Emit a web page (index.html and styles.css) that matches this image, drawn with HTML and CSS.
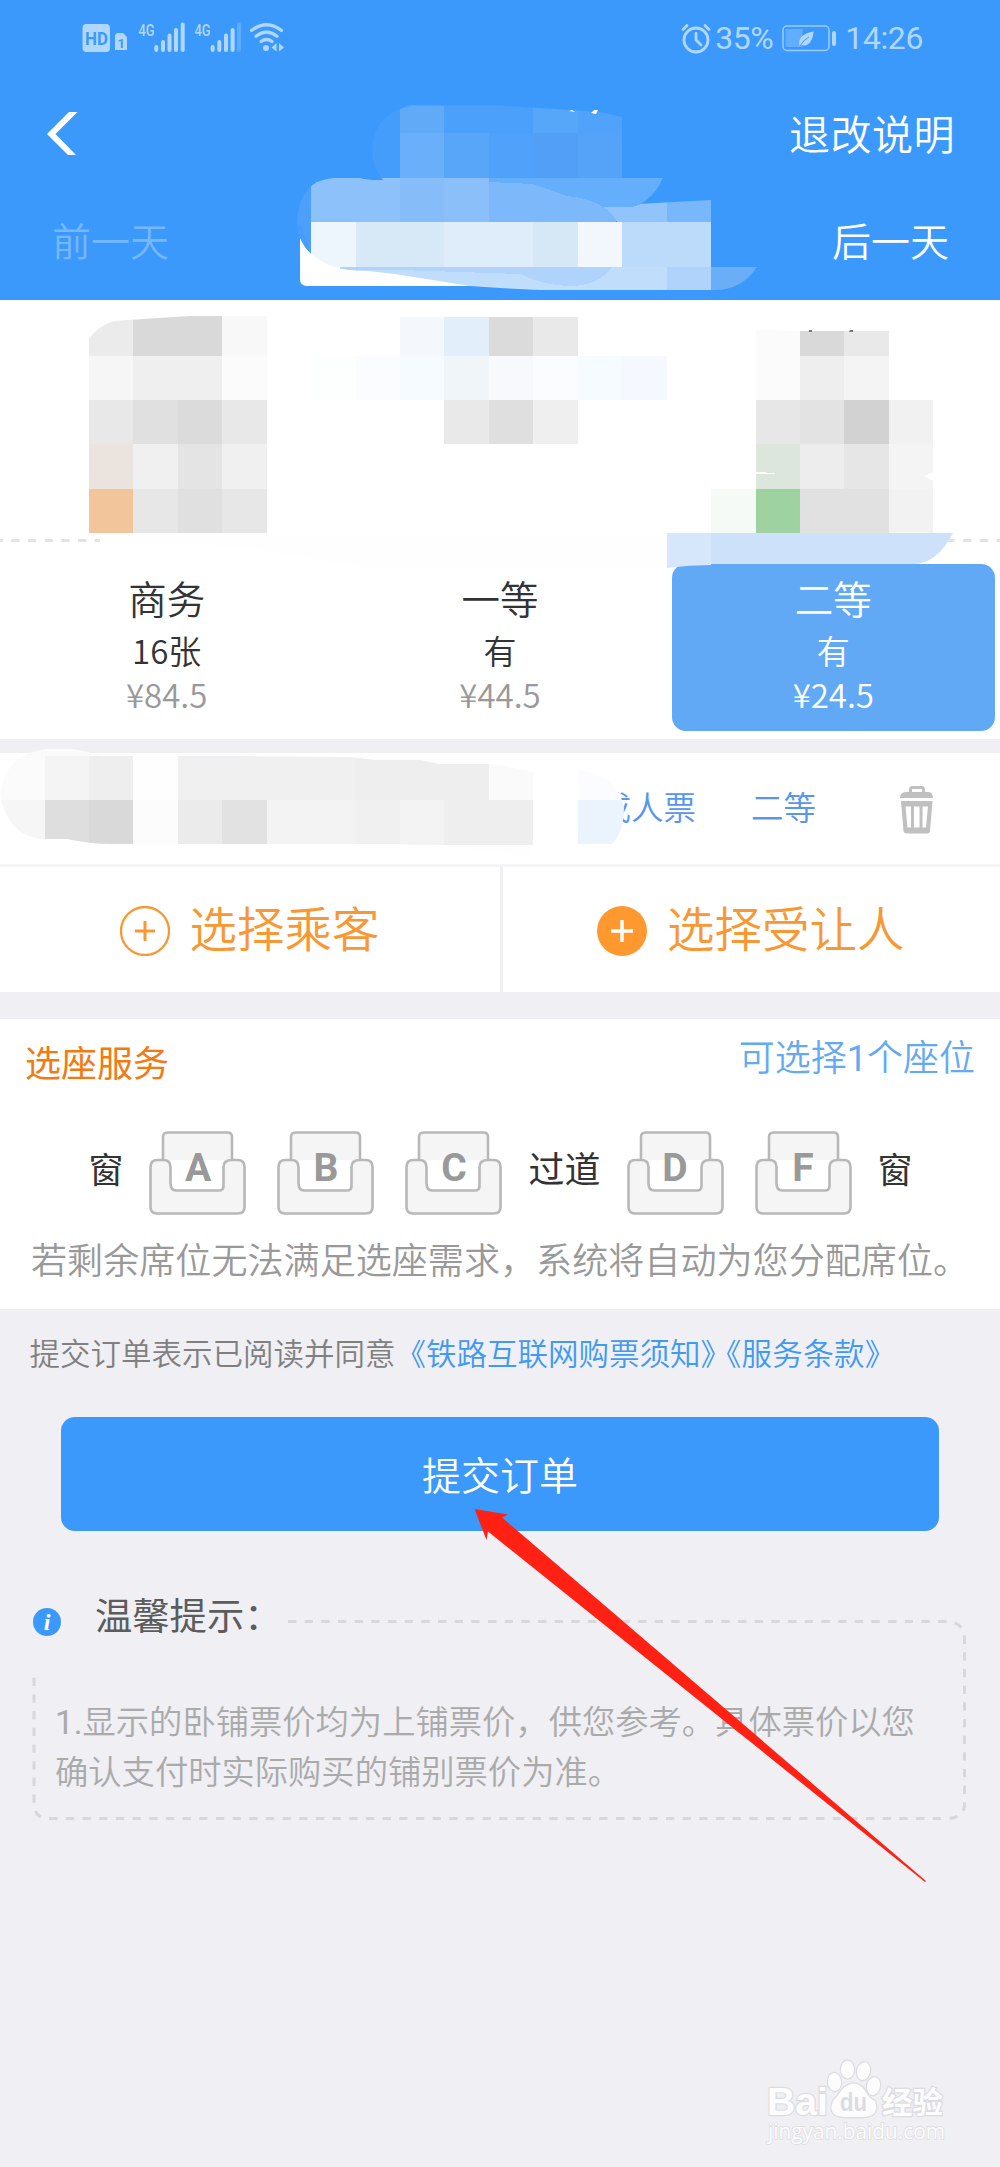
FILE: index.html
```html
<!DOCTYPE html>
<html lang="zh-CN">
<head>
<meta charset="utf-8">
<title>提交订单</title>
<link rel="stylesheet" href="styles.css">
</head>
<body>
<main class="page">
  <header class="header">
    <div class="status">
      <svg class="status-left" width="206" height="34" viewBox="80 20 206 34">
        <rect x="82.500" y="24" width="27.500" height="28" rx="4"/>
        <text class="hd" x="85" y="44.500" textLength="23" lengthAdjust="spacingAndGlyphs">HD</text>
        <path d="M117 33h6l4 4v13h-12V35z"/>
        <text class="sim" x="117.500" y="48">1</text>
        <text class="net" x="138.500" y="36" textLength="16" lengthAdjust="spacingAndGlyphs">4G</text>
        <g class="bars"><path d="M156.300 47v3"/><path d="M163 42v8"/><path d="M169.500 35.500V50"/><path d="M176 30v20"/><path d="M182.700 24.500V50"/></g>
        <text class="net" x="194.500" y="36" textLength="16" lengthAdjust="spacingAndGlyphs">4G</text>
        <g class="bars"><path d="M212.600 47v3"/><path d="M219.300 42v8"/><path d="M226 35.500V50"/><path d="M232.600 30v20"/><path class="faint" d="M239 24.500V50"/></g>
        <g class="wifi"><path d="M251.500 30.500Q266.500 19 281.500 30.500"/><path d="M256 36.200Q266.500 28 277 36.200"/><path d="M261 41.500Q266.500 37.500 272 41.500"/></g>
        <circle cx="266" cy="48" r="3"/>
        <path d="M276.500 43v8.500l-5-4zM279 43l5 4.500-5 4z"/>
      </svg>
      <div class="status-right">
        <svg width="30" height="31" viewBox="0 0 30 31"><circle class="line" cx="15" cy="17" r="12"/><path class="line" d="M15 10.500V17l5 5M2 6.500l4-4M28 6.500l-4-4"/></svg>
        <span class="battery-text">35%</span>
        <svg class="battery" width="54" height="27" viewBox="0 0 54 27"><rect class="shell" x="1" y="1" width="46" height="24.500" rx="4"/><rect class="charge" x="3.500" y="4" width="17" height="18"/><path d="M17.500 21c-2-8 4-13 14-14.500C31 16 26 22.500 19.500 20l-1.500 1.500z"/><path class="vein" d="M18 21q4-7 9-9"/><rect x="50" y="6" width="4" height="15" rx="2"/></svg>
        <time>14:26</time>
      </div>
    </div>
    <nav class="title-row">
      <svg width="34" height="46" viewBox="0 0 34 46"><path d="M22 1h8.500L8.500 23 29 44h-8L0 23z" fill="#fff"/></svg>
      <span>退改说明</span>
    </nav>
    <div class="date-row"><span class="off">前一天</span><span class="date"></span><span>后一天</span></div>
  </header>

  <section class="train">
    <div class="route"></div>
    <svg class="rule" width="1000" height="3"><path d="M-5.500 1.500H1000" stroke="#e3e3e3" stroke-width="3" stroke-dasharray="8.400 8.300"/></svg>
    <div class="classes">
      <div class="class"><b>商务</b><span>16张</span><i>¥84.5</i></div>
      <div class="class"><b>一等</b><span>有</span><i>¥44.5</i></div>
      <div class="class chosen"><b>二等</b><span>有</span><i>¥24.5</i></div>
    </div>
  </section>

  <section class="passenger">
    <div class="ticket">
      <span>成人票</span><span>二等</span>
      <svg width="34" height="48" viewBox="0 0 34 48"><path fill="none" stroke="#c0c0c0" stroke-width="3" d="M10.500 7V3.500q0-2 2-2h9q2 0 2 2V7"/><path fill="#c0c0c0" d="M5 6h24q4 1 4 6H0q0-5 5-6z"/><path fill="#c0c0c0" fill-rule="evenodd" d="M1 15h31.500L30 45q0 2.500-3 2.500H7Q4 47.500 3.500 45zM5.500 20.500 7.500 41.500h3.500v-21zM14 20.500v21h5.500v-21zM22.500 20.500v21H26l2-21z"/></svg>
    </div>
    <div class="actions">
      <div class="action first">
        <svg width="50" height="50" viewBox="0 0 50 50" fill="none" stroke="#f79834"><circle cx="25" cy="25" r="24" stroke-width="2.300"/><path d="M25 15v20M15 25h20" stroke-width="3"/></svg>
        <span>选择乘客</span>
      </div>
      <div class="action second">
        <svg width="50" height="50" viewBox="0 0 50 50"><circle cx="25" cy="25" r="25" fill="#ff982e"/><path d="M25 14v22M14 25h22" stroke="#fff" stroke-width="3.500"/></svg>
        <span>选择受让人</span>
      </div>
    </div>
  </section>

  <section class="seat-card">
    <div class="seat-head"><h2>选座服务</h2><span>可选择<em>1</em>个座位</span></div>
    <svg class="defs" width="0" height="0"><symbol id="seat" viewBox="0 0 97 84"><path d="M14 29V6q0-4.500 4.500-4.500h60Q83 1.500 83 6v23h5.500q7 0 7 7v40q0 6.500-6.500 6.500H8q-6.500 0-6.500-6.500V36q0-7 7-7zM14 29q7.500 0 7.500 7v16.500q0 7 6 7h42.500q4.500 0 4.500-4.500V36q0-7 8.500-7"/></symbol></svg>
    <div class="seats">
      <span>窗</span>
      <div class="seat-group">
        <div class="seat"><svg><use href="#seat"/></svg><strong>A</strong></div>
        <div class="seat"><svg><use href="#seat"/></svg><strong>B</strong></div>
        <div class="seat"><svg><use href="#seat"/></svg><strong>C</strong></div>
      </div>
      <span>过道</span>
      <div class="seat-group">
        <div class="seat"><svg><use href="#seat"/></svg><strong>D</strong></div>
        <div class="seat"><svg><use href="#seat"/></svg><strong>F</strong></div>
      </div>
      <span>窗</span>
    </div>
    <p class="seat-note">若剩余席位无法满足选座需求，系统将自动为您分配席位。</p>
  </section>

  <p class="agree">提交订单表示已阅读并同意<a>《铁路互联网购票须知》</a><a class="terms">《服务条款》</a></p>
  <div class="submit">提交订单</div>

  <section class="tips">
    <svg class="frame" width="935" height="206" viewBox="0 0 935 206"><path d="M256 3.500H914Q932.500 3.500 932.500 22V186Q932.500 200.500 914 200.500H18Q2 200.500 2 186V56"/></svg>
    <div class="tips-head"><svg width="28" height="28" viewBox="0 0 28 28"><circle cx="14" cy="14" r="14" fill="#3b99fc"/><text x="14" y="22" text-anchor="middle">i</text></svg><h3>温馨提示：</h3></div>
    <p><em>1.</em>显示的卧铺票价均为上铺票价，供您参考。具体票价以您<br>确认支付时实际购买的铺别票价为准。</p>
  </section>

  <svg class="overlay" width="1000" height="2167" viewBox="0 0 1000 2167">
    <defs>
      <clipPath id="leftCard"><path d="M80 350Q99 321 120 320.500L190 316H270V540H80z"/></clipPath>
      <clipPath id="rightCard"><path d="M700 328 800 331H1000V540H700z"/></clipPath>
      <clipPath id="name"><path d="M0 795Q4 755 45 749H72Q88 751 98 755L350 757 376 760H420L440 764 488 764 500 765 534 772V770H580Q618 775 624 808 624 832 612 844H578V857H533L460 849 400 844H110Q90 844 67 839H40Q8 835 0 795z"/></clipPath>
      <clipPath id="top"><path d="M400 105.500H500L600 112 622 117V178H663Q650 206 627 206H600L711 200V266.700H757Q742 290 715 290H540L500 288 470 286 395 274 368 271Q345 271 329 265 299 252 297 222 299 180 334 178H360Q368 180.500 383 180 372 166 372 150 374 111 415 105z"/></clipPath>
    </defs>
    <path fill="#fff" d="M300 238V279Q300 286 307 286H478L500 287V262H330L311 250z"/>
    <g class="mosaic" clip-path="url(#top)">
      <path fill="#459dfb" d="M365 100h50v85h-50z"/><path fill="#60aaf8" d="M400 100h44v33h-44z"/><path fill="#4aa0fb" d="M444 100h90v33h-90z"/><path fill="#56a6fa" d="M533 100h45v33h-45z"/><path fill="#50a2fa" d="M578 100h44v33h-44z"/>
      <path fill="#6aaff9" d="M400 133h44v45h-44z"/><path fill="#58a6f9" d="M444 133h45v45h-45z"/><path fill="#4fa1f9" d="M489 133h44v45h-44z"/><path fill="#529ff7" d="M533 133h45v45h-45z"/><path fill="#54a3f9" d="M578 133h44v45h-44z"/>
      <path fill="#4c9ffb" d="M290 178h21v90h-21z"/><path fill="#8dc1fa" d="M311 178h89v44h-89z"/><path fill="#86bcf8" d="M400 178h44v44h-44z"/><path fill="#8abffa" d="M444 178h45v44h-45z"/><path fill="#7cb8fa" d="M489 178h127v44H489z"/><path fill="#90c4fb" d="M603 200h64v22h-50Q613 213 603 207z"/><path fill="#64aefb" d="M489 178H663Q650 207 628 207H603Q590 198 567 196L533 184 489 182z"/>
      <path fill="#78b7fa" d="M667 200h44v23h-44z"/>
      <path fill="#edf5fd" d="M311 222h45v45h-45z"/><path fill="#d7e8f7" d="M356 222h88v45h-88z"/><path fill="#dfecf9" d="M444 222h89v45h-89z"/><path fill="#d6e8f6" d="M533 222h45v45h-45z"/><path fill="#f2f7fe" d="M578 222h44v45h-44z"/><path fill="#bcdbfa" d="M622 222h89v45h-89z"/>
      <path fill="#c0ddfb" d="M340 267H667V291H340z"/><path fill="#afd3fa" d="M340 267H612Q598 286 570 286 545 286 520 274L400 270H340zM667 267h44v24h-44z"/><path fill="#6aaef8" d="M711 267h50v24h-50z"/>
    </g>
    <path fill="#459dfb" d="M297 225h4q5 18 10 29Q299 243 297 225z"/>
    <path fill="#fff" d="M569 111l3-1 3 2zM591 113l3-3 4 0-2 4z"/>
    <g class="mosaic" clip-path="url(#leftCard)">
      <path fill="#ebebeb" d="M89 316h44v40H89z"/><path fill="#d9d9d9" d="M133 316h89v40h-89z"/><path fill="#f8f8f8" d="M222 316h45v40h-45z"/>
      <path fill="#f6f6f6" d="M89 356h44v44H89z"/><path fill="#efefef" d="M133 356h89v44h-89z"/><path fill="#fbfbfb" d="M222 356h45v44h-45z"/>
      <path fill="#e8e8e8" d="M89 400h44v44H89zM222 400h45v44h-45z"/><path fill="#e0e0e0" d="M133 400h45v44h-45z"/><path fill="#dbdbdb" d="M178 400h44v44h-44z"/>
      <path fill="#ebe3dd" d="M89 444h44v45H89z"/><path fill="#f0f0f0" d="M133 444h45v45h-45zM222 444h45v45h-45z"/><path fill="#e4e4e4" d="M178 444h44v45h-44z"/>
      <path fill="#f2c59b" d="M89 489h44v44H89z"/><path fill="#e7e7e7" d="M133 489h45v44h-45zM222 489h45v44h-45z"/><path fill="#e0e0e0" d="M178 489h44v44h-44z"/>
    </g>
    <g class="mosaic">
      <path fill="#f4f8fd" d="M400 317h44v39h-44z"/><path fill="#e2effb" d="M444 317h45v39h-45z"/><path fill="#dbdbdb" d="M489 317h44v39h-44z"/><path fill="#e9e9e9" d="M533 317h45v39h-45z"/>
      <path fill="#fdfffe" d="M311 356h45v44h-45z"/><path fill="#fafcff" d="M356 356h44v44h-44zM533 356h45v44h-45z"/><path fill="#f6fbff" d="M400 356h44v44h-44zM578 356h44v44h-44z"/><path fill="#eff5f9" d="M444 356h45v44h-45z"/><path fill="#f7f9fc" d="M489 356h44v44h-44z"/><path fill="#f5f9ff" d="M622 356h45v44h-45z"/>
      <path fill="#e9e9e9" d="M444 400h45v44h-45z"/><path fill="#dfdfdf" d="M489 400h44v44h-44z"/><path fill="#efefef" d="M533 400h45v44h-45z"/>
    </g>
    <g class="mosaic" clip-path="url(#rightCard)">
      <path fill="#fbfbfb" d="M756 320h44v80h-44z"/><path fill="#d9d9d9" d="M800 331h44v25h-44z"/><path fill="#e9e9e9" d="M844 331h45v25h-45z"/>
      <path fill="#eee" d="M800 356h44v44h-44z"/><path fill="#f4f4f4" d="M844 356h45v44h-45z"/>
      <path fill="#e7e7e7" d="M756 400h44v44h-44z"/><path fill="#e3e3e3" d="M800 400h44v44h-44z"/><path fill="#d2d2d2" d="M844 400h45v44h-45z"/><path fill="#f1f1f1" d="M889 400h44v44h-44z"/>
      <path fill="#dde6dd" d="M756 444h44v45h-44z"/><path fill="#ededed" d="M800 444h44v45h-44z"/><path fill="#e6e6e6" d="M844 444h45v45h-45z"/><path fill="#f4f4f4" d="M889 444h44v45h-44z"/>
      <path fill="#f5faf6" d="M711 489h45v44h-45z"/><path fill="#9fd2a1" d="M756 489h44v44h-44z"/><path fill="#e1e1e1" d="M800 489h89v44h-89z"/><path fill="#f2f2f2" d="M889 489h44v44h-44z"/>
      <path fill="#fff" d="M700 467l56 4.500 19 2-19 .8h-56zM924 476l10-4v9z"/>
    </g>
    <path fill="#777" d="M809 330h3v2h-3zM850 330h3v2h-4z"/>
    <path fill="#fefefe" d="M100 536H667V567H360L240 547 100 544z"/>
    <path fill="#cde2fa" d="M711 533H953Q937 564 913 564H711z"/><path fill="#d6e7fc" d="M667 533h44v32q-22 0-44 3z"/>
    <g class="mosaic" clip-path="url(#name)">
      <path fill="#fbfbfb" d="M0 749h100v51H0z"/><path fill="#f6f6f6" d="M0 800h45v45H0z"/>
      <path fill="#f4f4f4" d="M45 756h44v44H45z"/><path fill="#eee" d="M89 756h44v44H89z"/><path fill="#fefefe" d="M133 756h45v44h-45zM400 844h133v20H400z"/><path fill="#f0f0f0" d="M178 756h177v44H178z"/><path fill="#eee" d="M355 756h134v44H355z"/><path fill="#fafafa" d="M489 756h44v44h-44z"/><path fill="#fafcff" d="M578 756h50v44h-50z"/>
      <path fill="#dedede" d="M45 800h44v45H45z"/><path fill="#d9d9d9" d="M89 800h44v45H89z"/><path fill="#fcfcfc" d="M133 800h45v45h-45z"/><path fill="#ebebeb" d="M178 800h44v45h-44z"/><path fill="#e2e2e2" d="M222 800h45v45h-45z"/><path fill="#f3f3f3" d="M267 800h89v45h-89zM400 800h44v45h-44z"/><path fill="#f0f0f0" d="M356 800h44v45h-44z"/><path fill="#eee" d="M444 800h89v45h-89z"/><path fill="#fff" d="M533 772h45v85h-45z"/><path fill="#ebf3fd" d="M578 800h50v45h-50z"/>
    </g>
    <path fill="#ff2113" d="M474.500 1509 508 1514.500 502 1517.500 926 1881 925 1882 488 1531.500 486.500 1540z"/>
    <g class="mark">
      <text class="latin" x="767" y="2115" textLength="61" lengthAdjust="spacingAndGlyphs">Bai</text>
      <ellipse cx="834.500" cy="2082" rx="6.500" ry="9" transform="rotate(-5 834 2082)"/><ellipse cx="847.500" cy="2069.500" rx="6.500" ry="9"/><ellipse cx="863.500" cy="2071" rx="6.500" ry="9" transform="rotate(12 863 2071)"/><ellipse cx="873.500" cy="2086" rx="6.500" ry="9" transform="rotate(12 873 2086)"/>
      <path d="M853 2083.500Q861 2083.500 865 2091T875 2101Q880 2116 864 2117H844Q827 2116 833 2101 837 2097 841 2091T853 2083.500z"/>
      <text class="du" x="840" y="2111" textLength="27" lengthAdjust="spacingAndGlyphs">du</text>
      <text class="cn" x="882" y="2113" textLength="61" lengthAdjust="spacingAndGlyphs">经验</text>
      <text class="url" x="768" y="2139" textLength="177" lengthAdjust="spacingAndGlyphs">jingyan.baidu.com</text>
    </g>
  </svg>
</main>
</body>
</html>
```
FILE: styles.css
```css
* { box-sizing: border-box; }
body { margin: 0; background: #efeff4; font-family: "Noto Sans CJK SC", sans-serif; font-weight: 350; }
em, i { font-style: normal; }
h2, h3, p { margin: 0; }
em { font-family: Roboto, sans-serif; font-weight: 400; line-height: 1; }
.page { position: relative; width: 1000px; height: 2167px; overflow: hidden; }

.header { height: 300px; background: #3b99fc; color: #fff; }
.status { height: 100px; padding: 20px 77px 0 80px; display: flex; justify-content: space-between; align-items: flex-start; color: #b1d7ff; font: 400 32px/36px Roboto, sans-serif; }
.status svg { fill: #b1d7ff; }
.status text { font-family: Roboto, sans-serif; font-weight: 700; }
.status .hd { font-size: 18px; fill: #3b99fc; }
.status .sim { font-size: 13px; fill: #3b99fc; }
.status .net { font-size: 17px; font-weight: 500; }
.bars path { stroke: #b1d7ff; stroke-width: 4; stroke-linecap: round; }
.bars .faint { stroke: #5eabfb; }
.wifi path { fill: none; stroke: #b1d7ff; stroke-width: 3.2; stroke-linecap: round; }
.status-right { display: flex; align-items: center; height: 36px; }
.status-right .line { fill: none; stroke: #b1d7ff; stroke-width: 2.8; stroke-linecap: round; }
.battery-text { margin-left: 4px; width: 67px; letter-spacing: -.5px; }
.battery .shell { fill: none; stroke: #9ccbfd; stroke-width: 1.5; }
.battery .charge { fill: #62adfd; }
.battery .vein { fill: none; stroke: #3b99fc; stroke-width: 1; }
.status-right time { margin-left: 9px; letter-spacing: -.4px; }
.title-row { height: 88px; padding: 0 45px 0 47px; display: flex; justify-content: space-between; align-items: flex-start; font-size: 41px; line-height: 64px; letter-spacing: .5px; }
.title-row svg { margin-top: 11px; }
.date-row { display: flex; justify-content: space-between; padding: 19px 51px 0 52px; font-size: 39px; line-height: 64px; }
.date-row .off { color: #76b7fd; }

.train { height: 439px; background: #fff; padding-top: 239px; }
.rule { display: block; }
.classes { display: grid; grid-template-columns: repeat(3, 1fr); margin-top: 22px; }
.class { display: flex; flex-direction: column; align-items: center; height: 167px; padding-top: 7px; margin: 0 5.5px; border-radius: 14px; color: #333; line-height: 50px; }
.class b { font-size: 38.500px; font-weight: inherit; height: 54px; line-height: 52px; }
.class span { font-size: 33px; height: 47px; }
.class i { font-size: 33px; line-height: 44px; color: #999; }
.class.chosen, .class.chosen i { color: #fff; }
.chosen { background: #61a9f5; }

.passenger { margin-top: 14px; height: 239px; background: #fff; }
.ticket { height: 114px; border-bottom: 3px solid #f5f5f8; display: flex; align-items: flex-start; justify-content: flex-end; padding-right: 66px; color: #5795ee; font-size: 32.500px; line-height: 50px; }
.ticket span { margin: 28px 55px 0 0; }
.ticket span + span { margin-right: 84px; }
.ticket svg { margin-top: 33px; }
.actions { display: flex; height: 125px; color: #f79834; font-size: 47.500px; line-height: 70px; }
.action { width: 503px; display: flex; align-items: flex-start; padding: 39px 0 0 119.500px; border-right: 3px solid #f0f0f4; }
.action.second { width: 497px; padding-left: 94px; border: 0; }
.action span { margin: -14px 0 0 20px; }

.seat-card { margin-top: 27px; height: 290px; background: #fff; }
.seat-head { display: flex; justify-content: space-between; padding: 10px 25px 0 25px; height: 112px; font-size: 36px; line-height: 52px; color: #65aaf0; }
.seat-head h2 { margin-top: 6px; font-size: 36px; font-weight: 400; color: #f27a11; }
.defs { display: block; }
.seats { display: flex; align-items: center; justify-content: center; gap: 26px; height: 84px; padding-left: 1px; color: #333; font-size: 36px; font-weight: 400; }
.seats > span { margin-top: -12px; }
.seats > span:first-child, .seats > span:last-child { font-size: 35px; }
.seat-group { display: flex; gap: 31px; }
.seat { display: grid; place-items: center; width: 97px; height: 84px; }
.seat svg, .seat strong { grid-area: 1 / 1; }
.seat svg { width: 97px; height: 84px; fill: #f5f5f5; stroke: #b8b8b8; stroke-width: 2.6; }
.seat strong { margin-top: -10px; font: 700 39px/40px Roboto, sans-serif; color: #999; }
.seat-note { margin-top: 17px; padding-left: 31px; font-size: 36.100px; line-height: 52px; color: #999; white-space: nowrap; }

.agree { height: 108px; padding: 18px 0 0 29.500px; font-size: 30.500px; line-height: 50px; color: #808080; white-space: nowrap; }
.agree a { color: #4099f3; }
.agree .terms { margin-left: -5px; letter-spacing: .3px; }
.submit { margin: 0 61px; height: 114px; border-radius: 14px; background: #3b99fc; color: #fff; text-align: center; font-size: 39px; line-height: 112px; }

.tips { position: relative; margin: 85px 33px 0 32px; }
.frame { position: absolute; left: 0; top: 2px; fill: none; stroke: #d8d8d8; stroke-width: 3; stroke-dasharray: 8.300 8.370; }
.tips-head { display: flex; align-items: flex-start; height: 79px; }
.tips-head svg { margin: -8px 0 0 1px; }
.tips-head text { fill: #fff; font: italic 700 24px "Liberation Serif", serif; }
.tips-head h3 { margin: -28px 0 0 34px; font-size: 37.300px; line-height: 52px; font-weight: 400; color: #5c5c5c; }
.tips p { padding-left: 23px; font-size: 33.300px; line-height: 50px; color: #aaa; white-space: nowrap; }

.overlay { position: absolute; inset: 0; }
.mosaic { shape-rendering: crispEdges; }
.mark { fill: #fcfcfd; stroke: #dcdce0; stroke-width: 2.4; paint-order: stroke; }
.mark .latin { font: 700 39px "Liberation Sans", sans-serif; }
.mark .du { font: 700 25px "Liberation Sans", sans-serif; fill: #dcdce0; stroke: none; }
.mark .cn { font: 700 30px "Noto Sans CJK SC", sans-serif; }
.mark .url { font: 400 22px "Open Sans", sans-serif; stroke-width: 1.5; }
```
